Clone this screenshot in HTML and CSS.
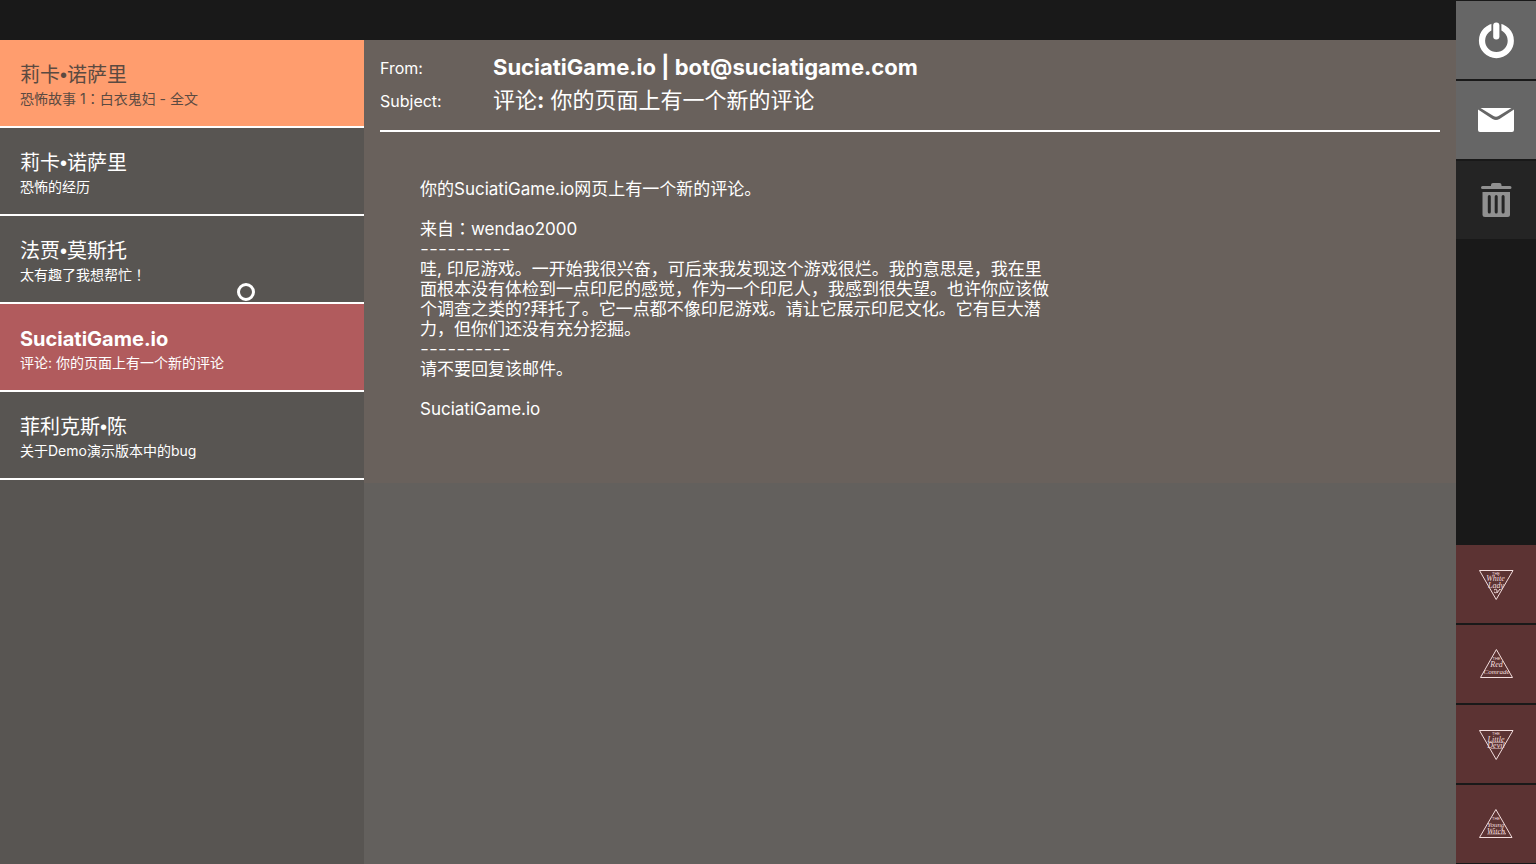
FILE: index.html
```html
<!DOCTYPE html>
<html lang="zh-CN">
<head>
<meta charset="utf-8">
<title>Mail</title>
<link rel="stylesheet" href="styles.css">
</head>
<body>
<div class="app">
  <div class="window">
    <header class="topbar"></header>
    <div class="mail">
      <nav class="inbox" aria-label="收件箱">
        <button class="item item-new" type="button"><span class="sender">莉卡<span class="dot">•</span>诺萨里</span><span class="topic">恐怖故事 1<span class="mid" lang="zh-Hant">：</span>白衣鬼妇 - 全文</span></button>
        <button class="item" type="button"><span class="sender">莉卡<span class="dot">•</span>诺萨里</span><span class="topic">恐怖的经历</span></button>
        <button class="item" type="button"><span class="sender">法贾<span class="dot">•</span>莫斯托</span><span class="topic">太有趣了我想帮忙<span class="mid" lang="zh-Hant">！</span></span></button>
        <button class="item item-open" type="button"><span class="sender">SuciatiGame.io</span><span class="topic">评论: 你的页面上有一个新的评论</span></button>
        <button class="item" type="button"><span class="sender">菲利克斯<span class="dot">•</span>陈</span><span class="topic">关于Demo演示版本中的bug</span></button>
      </nav>
      <main class="reader">
        <article class="message">
          <dl class="fields">
            <dt>From:</dt><dd><b>SuciatiGame.io | bot@suciatigame.com</b></dd>
            <dt>Subject:</dt><dd>评论<b>:</b> 你的页面上有一个新的评论</dd>
          </dl>
          <div class="content">
            <p>你的SuciatiGame.io网页上有一个新的评论。</p>
            <p class="source">来自<span class="mid" lang="zh-Hant">：</span>wendao2000</p>
            <p class="dashes">----------</p>
            <p>哇, 印尼游戏。一开始我很兴奋，可后来我发现这个游戏很烂。我的意思是，我在里面根本没有体检到一点印尼的感觉，作为一个印尼人，我感到很失望。也许你应该做个调查之类的?拜托了。它一点都不像印尼游戏。请让它展示印尼文化。它有巨大潜力，但你们还没有充分挖掘。</p>
            <p class="dashes">----------</p>
            <p>请不要回复该邮件。</p>
            <p class="source">SuciatiGame.io</p>
          </div>
        </article>
      </main>
    </div>
  </div>
  <aside class="rail">
    <button class="tile" type="button" aria-label="Power">
      <svg width="40" height="40" viewBox="0 0 40 40"><circle cx="20.400" cy="20.700" r="14.400" fill="none" stroke="#fff" stroke-width="6.200"/><path d="M15.400 1H25.400V16A5 5 0 0 1 15.400 16Z" fill="#666"/><rect x="17.200" y="2.500" width="6.200" height="17" rx="3" fill="#fff"/></svg>
    </button>
    <button class="tile" type="button" aria-label="Mail">
      <svg width="40" height="40" viewBox="0 0 40 40"><path d="M2 9.500L16.500 18.900Q20 21 23.500 18.900L38 9.500V30Q38 32 36 32H4Q2 32 2 30Z" fill="#fff"/><path d="M4.500 8H35.500L22.500 16Q20 17.500 17.500 16Z" fill="#fff"/></svg>
    </button>
    <button class="tile tile-off" type="button" aria-label="Delete">
      <svg width="40" height="40" viewBox="0 0 40 40"><path d="M15 5Q15 3 17 3H23.500Q25.500 3 25.500 5V6H34Q35.500 6 35.500 7.500T34 9H6.500Q5 9 5 7.500T6.500 6H15Z" fill="#909090"/><path d="M6.500 12H34V34.500Q34 37 31.500 37H9Q6.500 37 6.500 34.500Z" fill="#909090"/><path d="M13.300 16.500V32M20.200 16.500V32M27.100 16.500V32" stroke="#242424" stroke-width="3" stroke-linecap="round"/></svg>
    </button>
    <button class="tile tile-story tile-first" type="button">
      <svg class="badge" width="40" height="40" viewBox="0 0 40 40"><path d="M3.500 6.500H37L20.200 35.500Z"/><text class="the" x="20" y="11">THE</text><text x="19.500" y="17">White</text><text x="20" y="23.500">Lady</text><path d="M18 26Q21 24 21 27T18 28M21 29L24 25"/></svg>
    </button>
    <button class="tile tile-story" type="button">
      <svg class="badge" width="40" height="40" viewBox="0 0 40 40"><path d="M20.400 5.500L36.500 33.500H4.500Z"/><text class="the" x="20.500" y="16">THE</text><text x="20.500" y="23">Red</text><text class="long" x="20.500" y="30">Comrade</text></svg>
    </button>
    <button class="tile tile-story" type="button">
      <svg class="badge" width="40" height="40" viewBox="0 0 40 40"><path d="M3.500 6.500H37L20.200 35.500Z"/><text class="the" x="20" y="11">THE</text><text x="20" y="17.500">Little</text><text x="20" y="24">Devil</text><path d="M14 18.500H27M15 24.500H26" stroke-width="0.500"/></svg>
    </button>
    <button class="tile tile-story" type="button">
      <svg class="badge" width="40" height="40" viewBox="0 0 40 40"><path d="M19.900 5.500L36 33.500H3.500Z"/><text class="the" x="20" y="16">THE</text><text class="long" x="20" y="23">Young</text><text x="20" y="30">Witch</text><path d="M25 24.500L30 30H11" stroke-width="0.500"/></svg>
    </button>
  </aside>
</div>
<div class="pointer"></div>
</body>
</html>
```
FILE: styles.css
```css
* { box-sizing: border-box; }
body { margin: 0; font-family: Inter, "Noto Sans CJK SC", sans-serif; color: #fff; background: #191919; }
button { font: inherit; color: inherit; border: 0; padding: 0; background: none; text-align: left; }
.app { display: flex; min-height: 100vh; }
.window { flex: 1; display: flex; flex-direction: column; }
.topbar { height: 40px; }
.mail { flex: 1; display: grid; grid-template-columns: 364px 1fr; }
.inbox { background: #585552; display: flex; flex-direction: column; }
.item { height: 88px; padding: 21px 20px 0; border-bottom: 2px solid #fff; display: flex; flex-direction: column; justify-content: flex-start; }
.item-new { background: #ff9d6e; color: #5b4a41; }
.item-open { background: #b15b5d; }
.item-open .sender { font-weight: 700; }
.sender { font-size: 20px; line-height: 28px; }
.topic { font-size: 14px; line-height: 20px; }
.dot { font-family: "Liberation Sans", sans-serif; }
.mid { font-family: Inter, "Noto Sans CJK TC", sans-serif; }
.reader { background: #63605d; }
.message { background: #69615c; padding: 11px 16px 64px; }
.fields { margin: 0; padding-bottom: 13px; border-bottom: 2px solid #fff; display: grid; grid-template-columns: 113px 1fr; grid-auto-rows: 33px; align-items: center; }
.fields dt { font-size: 16px; }
.fields dd { margin: 0; padding-bottom: 1px; font-size: 22px; line-height: 28px; }
.content { margin: 47px 40px 0; max-width: 635px; font-size: 17px; line-height: 20px; }
.content p { margin: 0; }
.content .source { margin-top: 20px; }
.content .dashes { font-size: 20px; font-weight: 300; }
.rail { width: 80px; padding: 1px 0; display: flex; flex-direction: column; gap: 2px; }
.tile { height: 78px; background: #666; display: flex; align-items: center; justify-content: center; }
.tile-off { background: #242424; }
.tile-story { background: #5c3333; }
.tile-first { margin-top: auto; }
.badge { fill: none; stroke: #f3dede; stroke-width: 1; }
.badge text { fill: #f3dede; stroke: none; font: italic 8px "Liberation Serif", serif; text-anchor: middle; }
.badge .long { font-size: 7px; }
.badge .the { font: 4px "Liberation Sans", sans-serif; }
.pointer { position: absolute; left: 237px; top: 283px; width: 18px; height: 18px; border: 3px solid #fff; border-radius: 50%; pointer-events: none; }
```
